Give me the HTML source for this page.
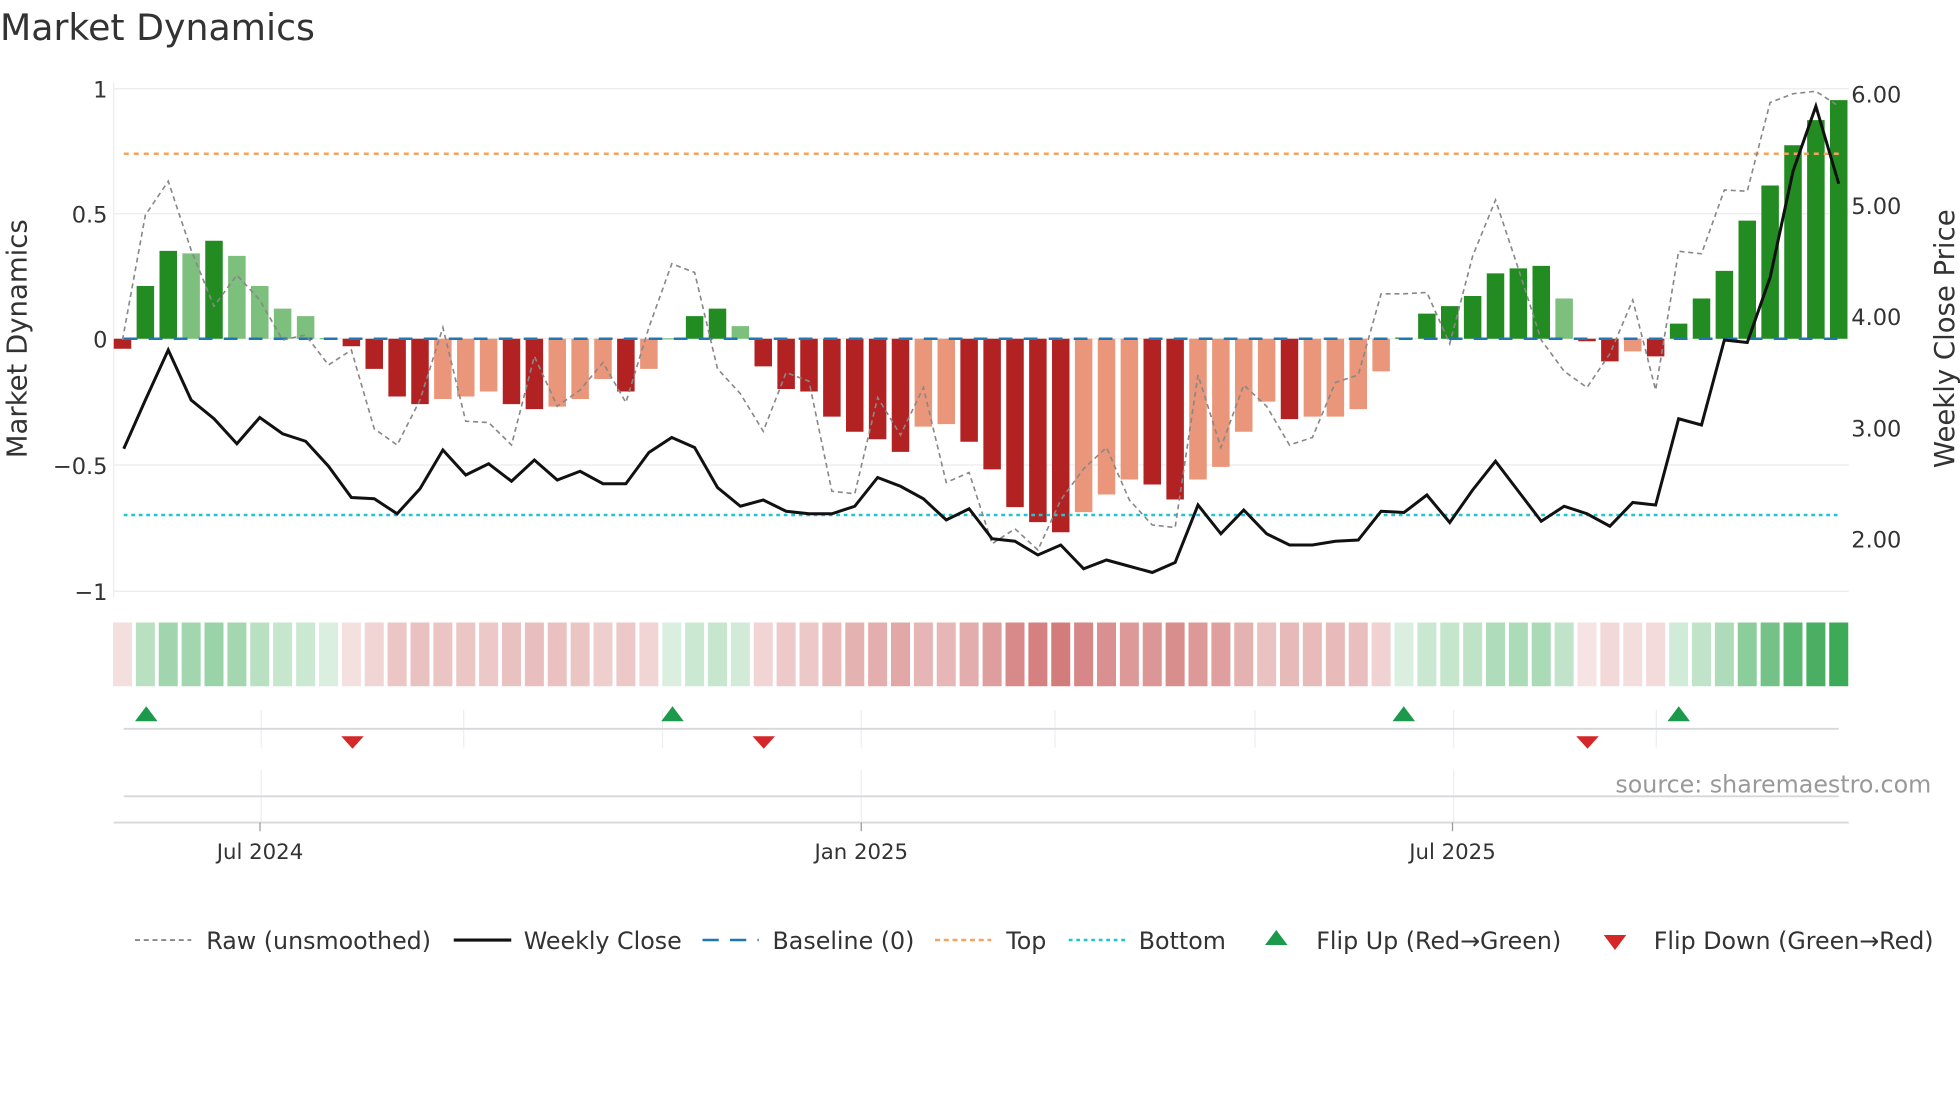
<!DOCTYPE html>
<html><head><meta charset="utf-8"><style>
html,body{margin:0;padding:0;background:#fff;}
svg{display:block;}
text{font-family:"DejaVu Sans","Liberation Sans",sans-serif;fill:#333;}
</style></head><body>
<svg id="s" width="1960" height="1102" viewBox="0 0 1568 881.6" xmlns="http://www.w3.org/2000/svg">
<rect width="1568" height="882" fill="#fff"/>
<text x="0" y="32" font-size="29">Market Dynamics</text>
<g stroke="#ececec" stroke-width="1">
<line x1="91" x2="1479" y1="71" y2="71"/><line x1="91" x2="1479" y1="171" y2="171"/>
<line x1="91" x2="1479" y1="271" y2="271"/><line x1="91" x2="1479" y1="372" y2="372"/>
<line x1="91" x2="1479" y1="473" y2="473"/><line x1="91" x2="91" y1="66" y2="478"/>
</g>
<g font-size="18" text-anchor="end">
<text x="86" y="78">1</text><text x="86" y="178">0.5</text><text x="86" y="278">0</text>
<text x="86" y="379">−0.5</text><text x="86" y="480">−1</text>
</g>
<g font-size="18">
<text x="1481" y="82">6.00</text><text x="1481" y="171">5.00</text><text x="1481" y="260">4.00</text>
<text x="1481" y="349">3.00</text><text x="1481" y="438">2.00</text>
</g>
<text font-size="22" text-anchor="middle" transform="translate(21,271) rotate(-90)">Market Dynamics</text>
<text font-size="22" text-anchor="middle" transform="translate(1563,271) rotate(-90)">Weekly Close Price</text>
<g id="bars"></g>
<line x1="99" x2="1471" y1="123" y2="123" stroke="#f4a460" stroke-width="2" stroke-dasharray="4,4"/>
<line x1="99" x2="1471" y1="412" y2="412" stroke="#22c4d4" stroke-width="2" stroke-dasharray="3,3"/>
<line x1="99" x2="1471" y1="271" y2="271" stroke="#1f77b4" stroke-width="2" stroke-dasharray="11,9"/>
<polyline id="raw" fill="none" stroke="#888" stroke-width="1.3" stroke-dasharray="4,3"/>
<polyline id="close" fill="none" stroke="#111" stroke-width="2.4"/>
<g id="heat"></g>
<g stroke="#eceff2" stroke-width="1">
<line x1="209" x2="209" y1="568" y2="598"/><line x1="371" x2="371" y1="568" y2="598"/>
<line x1="530" x2="530" y1="568" y2="598"/><line x1="689" x2="689" y1="568" y2="598"/>
<line x1="844" x2="844" y1="568" y2="598"/><line x1="1004" x2="1004" y1="568" y2="598"/>
<line x1="1163" x2="1163" y1="568" y2="598"/><line x1="1325" x2="1325" y1="568" y2="598"/>
<line x1="209" x2="209" y1="616" y2="658"/><line x1="689" x2="689" y1="616" y2="658"/>
<line x1="1163" x2="1163" y1="616" y2="658"/>
</g>
<line x1="99" x2="1471" y1="583" y2="583" stroke="#d6d8db" stroke-width="1.5"/>
<line x1="99" x2="1471" y1="637" y2="637" stroke="#d6d8db" stroke-width="1.5"/>
<line x1="91" x2="1479" y1="658" y2="658" stroke="#d6d8db" stroke-width="1.5"/>
<g fill="#1a9a4a">
<polygon points="117,565 108,577 126,577"/><polygon points="538,565 529,577 547,577"/>
<polygon points="1123,565 1114,577 1132,577"/><polygon points="1343,565 1334,577 1352,577"/>
</g>
<g fill="#d62728">
<polygon points="282,599 273,589 291,589"/><polygon points="611,599 602,589 620,589"/>
<polygon points="1270,599 1261,589 1279,589"/>
</g>
<g stroke="#999" stroke-width="1"><line x1="208" x2="208" y1="658" y2="665"/><line x1="689" x2="689" y1="658" y2="665"/><line x1="1162" x2="1162" y1="658" y2="665"/></g>
<g font-size="17" text-anchor="middle">
<text x="208" y="687">Jul 2024</text><text x="689" y="687">Jan 2025</text><text x="1162" y="687">Jul 2025</text>
</g>
<text x="1545" y="634" font-size="19" text-anchor="end" style="fill:#999">source: sharemaestro.com</text>
<g font-size="19">
<line x1="108" x2="153" y1="752" y2="752" stroke="#888" stroke-width="1.5" stroke-dasharray="4,3"/>
<text x="165" y="759">Raw (unsmoothed)</text>
<line x1="363" x2="409" y1="752" y2="752" stroke="#111" stroke-width="2.5"/>
<text x="419" y="759">Weekly Close</text>
<line x1="562" x2="607" y1="752" y2="752" stroke="#1f77b4" stroke-width="2" stroke-dasharray="13,9"/>
<text x="618" y="759">Baseline (0)</text>
<line x1="748" x2="793" y1="752" y2="752" stroke="#f4a460" stroke-width="2" stroke-dasharray="4,3"/>
<text x="805" y="759">Top</text>
<line x1="855" x2="900" y1="752" y2="752" stroke="#22c4d4" stroke-width="2" stroke-dasharray="3,3"/>
<text x="911" y="759">Bottom</text>
<polygon points="1021,744 1012,756 1030,756" fill="#1a9a4a"/>
<text x="1053" y="759">Flip Up (Red→Green)</text>
<polygon points="1292,760 1283,748 1301,748" fill="#d62728"/>
<text x="1323" y="759">Flip Down (Green→Red)</text>
</g>
</svg>
<script>
var v=[-0.04,0.21,0.35,0.34,0.39,0.33,0.21,0.12,0.09,0.003,-0.03,-0.12,-0.23,-0.26,-0.24,-0.23,-0.21,-0.26,-0.28,-0.27,-0.24,-0.16,-0.21,-0.12,0.002,0.09,0.12,0.05,-0.11,-0.2,-0.21,-0.31,-0.37,-0.4,-0.45,-0.35,-0.34,-0.41,-0.52,-0.67,-0.73,-0.77,-0.69,-0.62,-0.56,-0.58,-0.64,-0.56,-0.51,-0.37,-0.25,-0.32,-0.31,-0.31,-0.28,-0.13,0.005,0.1,0.13,0.17,0.26,0.28,0.29,0.16,-0.01,-0.09,-0.05,-0.07,0.06,0.16,0.27,0.47,0.61,0.77,0.87,0.95];
var dark=[1,1,1,0,1,0,0,0,0,0,1,1,1,1,0,0,0,1,1,0,0,0,1,0,0,1,1,0,1,1,1,1,1,1,1,0,0,1,1,1,1,1,0,0,0,1,1,0,0,0,0,1,0,0,0,0,1,1,1,1,1,1,1,0,1,1,0,1,1,1,1,1,1,1,1,1];
var cl=[359,320,280,320,335,355,334,347,353,373,398,399,411,391,360,380,371,385,368,384,377,387,387,362,350,358,390,405,400,409,411,411,405,382,389,399,416,407,431,433,444,436,455,448,453,458,450,404,427,408,427,436,436,433,432,409,410,396,418,392,369,393,417,405,411,421,402,404,335,340,272,274,222,137,85,147];
var rw=[272,172,145,200,245,220,240,272,268,292,280,343,356,320,262,337,338,356,285,325,312,290,322,262,211,218,295,315,345,298,305,393,395,318,348,310,386,378,435,423,440,400,375,358,400,420,422,300,358,308,325,356,350,306,300,235,235,234,275,205,160,215,272,297,310,283,240,312,201,203,152,153,82,75,73,85];
var ns="http://www.w3.org/2000/svg",step=(1471-98)/75,b="",h="",pc=[],pr=[];
for(var i=0;i<76;i++){var x=98+step*i,y0=271,hh=v[i]*201;
var col=v[i]>=0?(dark[i]?"#228b22":"#7dbf7d"):(dark[i]?"#b22222":"#e9967a");
b+='<rect x="'+(x-7).toFixed(1)+'" y="'+(hh>=0?y0-hh:y0).toFixed(1)+'" width="14" height="'+Math.max(Math.abs(hh),1).toFixed(1)+'" fill="'+col+'"/>';
var a=0.18+0.82*Math.min(Math.abs(v[i]),1),c;
if(v[i]>=0){c=[255-(255-52)*a,255-(255-166)*a,255-(255-80)*a];}else{a=0.15+0.75*Math.abs(v[i]);c=[255-(255-195)*a,255-(255-75)*a,255-(255-75)*a];}
h+='<rect x="'+(x-7.6).toFixed(1)+'" y="498" width="15.2" height="51" fill="rgb('+c.map(Math.round).join(",")+')"/>';
pc.push((i==0?99:x).toFixed(1)+","+cl[i]);pr.push(x.toFixed(1)+","+rw[i]);}
document.getElementById("bars").innerHTML=b;document.getElementById("heat").innerHTML=h;
document.getElementById("close").setAttribute("points",pc.join(" "));
document.getElementById("raw").setAttribute("points",pr.join(" "));
</script>
</body></html>
